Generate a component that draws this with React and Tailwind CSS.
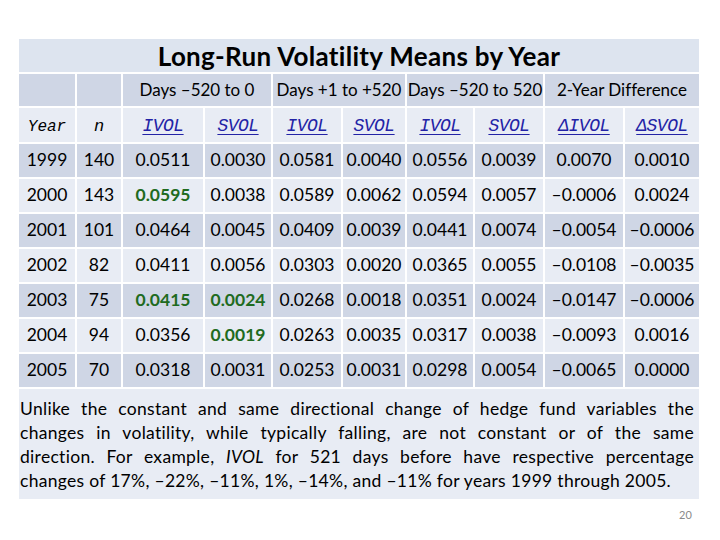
const cols = 'grid-cols-[56px_44px_80px_66px_68px_62px_66px_68px_78px_74px]'

const rows = [
  ['1999', '140', '0.0511', '0.0030', '0.0581', '0.0040', '0.0556', '0.0039', '0.0070', '0.0010'],
  ['2000', '143', '0.0595', '0.0038', '0.0589', '0.0062', '0.0594', '0.0057', '–0.0006', '0.0024'],
  ['2001', '101', '0.0464', '0.0045', '0.0409', '0.0039', '0.0441', '0.0074', '–0.0054', '–0.0006'],
  ['2002', '82', '0.0411', '0.0056', '0.0303', '0.0020', '0.0365', '0.0055', '–0.0108', '–0.0035'],
  ['2003', '75', '0.0415', '0.0024', '0.0268', '0.0018', '0.0351', '0.0024', '–0.0147', '–0.0006'],
  ['2004', '94', '0.0356', '0.0019', '0.0263', '0.0035', '0.0317', '0.0038', '–0.0093', '0.0016'],
  ['2005', '70', '0.0318', '0.0031', '0.0253', '0.0031', '0.0298', '0.0054', '–0.0065', '0.0000'],
]

// cells shown in bold green: "row-col"
const highlight = new Set(['1-2', '4-2', '4-3', '5-3'])

const varNames = ['IVOL', 'SVOL', 'IVOL', 'SVOL', 'IVOL', 'SVOL', 'ΔIVOL', 'ΔSVOL']

export default function App() {
  return (
    <div className="w-[720px] h-[540px] bg-white relative font-['Lato',sans-serif] text-black [font-variant-ligatures:none]">
      <div className="pt-[39px] pl-[19px]">
        <div className={`grid ${cols} grid-rows-[33px_32px_34px_repeat(7,33px)] gap-[2px] w-[680px]`}>
          {/* title */}
          <div className="col-span-10 bg-[#dde4ef] flex items-center justify-center text-[26px] font-bold pt-[2px] tracking-[0.3px]">
            Long-Run Volatility Means by Year
          </div>

          {/* period headers */}
          <div className="bg-[#cfd6e5]" />
          <div className="bg-[#cfd6e5]" />
          {['Days –520 to 0', 'Days +1 to +520', 'Days –520 to 520', '2-Year Difference'].map(t => (
            <div key={t} className="col-span-2 bg-[#cfd6e5] flex items-center justify-center text-[17px] whitespace-nowrap">
              {t}
            </div>
          ))}

          {/* variable headers */}
          <div className="bg-[#e8ecf4] flex items-center justify-center italic font-['Liberation_Mono',monospace] text-[16px] pt-[3px]">Year</div>
          <div className="bg-[#e8ecf4] flex items-center justify-center italic font-['Liberation_Mono',monospace] text-[17px] pt-[3px]">n</div>
          {varNames.map((v, i) => (
            <div key={i} className="bg-[#e8ecf4] flex items-center justify-center pt-[3px]">
              <span className="italic underline underline-offset-[3px] text-[#2323a6] font-['Liberation_Mono',monospace] text-[18px] tracking-[-0.5px]">{v}</span>
            </div>
          ))}

          {/* data rows */}
          {rows.map((r, ri) =>
            r.map((c, ci) => {
              const green = highlight.has(`${ri}-${ci}`)
              return (
                <div
                  key={`${ri}-${ci}`}
                  className={`${ri % 2 === 0 ? 'bg-[#cfd6e5]' : 'bg-[#e8ecf4]'} flex items-center justify-center text-[17.5px] whitespace-nowrap ${green ? 'font-bold text-[#1f6b1f]' : ''}`}
                >
                  {c}
                </div>
              )
            })
          )}
        </div>

        {/* note */}
        <div className="mt-[2px] w-[680px] h-[110px] bg-[#e8ecf4] pl-[1px] pr-[5px] pt-[8px] text-[17.5px] leading-[24px] tracking-[0.3px]">
          <div className="text-justify [text-align-last:justify]">
            Unlike the constant and same directional change of hedge fund variables the
          </div>
          <div className="text-justify [text-align-last:justify]">
            changes in volatility, while typically falling, are not constant or of the same
          </div>
          <div className="text-justify [text-align-last:justify]">
            direction. For example, <i>IVOL</i> for 521 days before have respective percentage
          </div>
          <div>
            changes of 17%, –22%, –11%, 1%, –14%, and –11% for years 1999 through 2005.
          </div>
        </div>
      </div>

      <div className="absolute left-[679px] top-[507px] text-[11px] text-[#8a8a8a]">20</div>
    </div>
  )
}
